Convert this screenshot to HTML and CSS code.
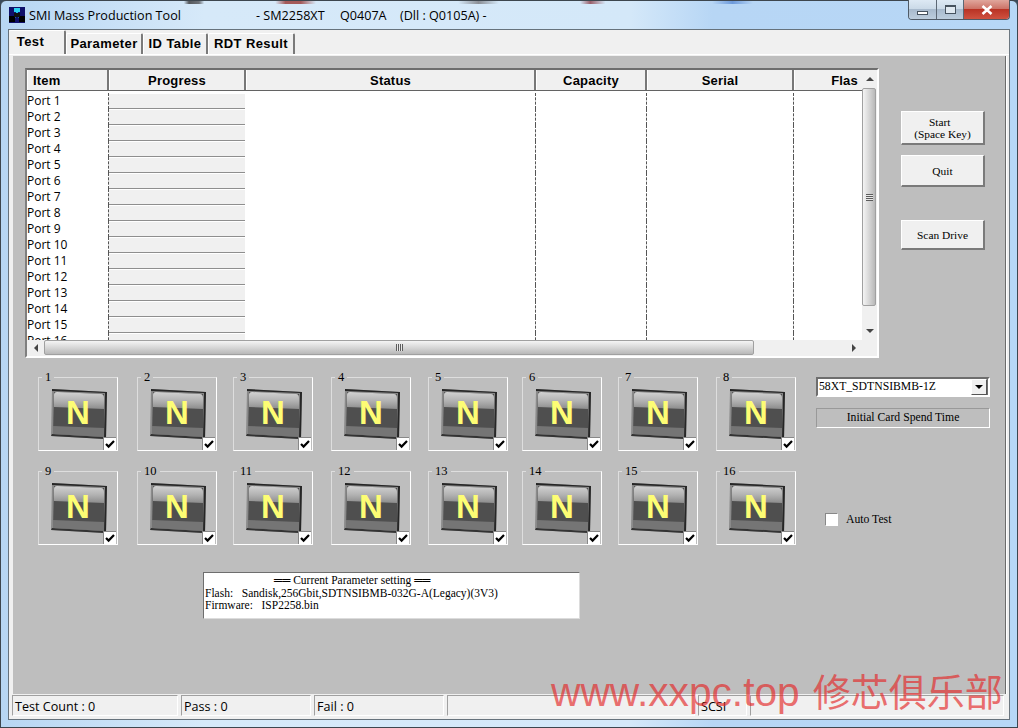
FILE: index.html
```html
<!DOCTYPE html>
<html lang="en">
<head>
<meta charset="utf-8">
<title>SMI Mass Production Tool</title>
<link rel="stylesheet" href="styles.css">
</head>
<body>
<svg class="defs" width="0" height="0" aria-hidden="true">
  <defs>
    <linearGradient id="glass" x1="0" y1="0" x2="0" y2="1">
      <stop offset="0" stop-color="#d2d2d2"/>
      <stop offset="0.55" stop-color="#b0b0b0"/>
      <stop offset="1" stop-color="#8c8c8c"/>
    </linearGradient>
    <symbol id="n-icon" viewBox="0 0 80 74">
      <polygon points="14,12 69,15 68,62 13,59" fill="#8a8a8a"/>
      <path d="M14 12 L69 15 L68 62 L66 61 L67 16 L14 14 Z" fill="#262626"/>
      <path d="M13 59 L14 57 L66 60 L66 62 Z" fill="#333"/>
      <polygon points="16,15 66,17 66,60 15,57" fill="#4f4f4f"/>
      <path d="M19 15 L63 17 Q66 17 66 21 L66 32 L16 30 L16 18 Q16 15 19 15 Z" fill="url(#glass)"/>
      <polygon points="15,49 66,51 66,60 15,57" fill="#757575"/>
      <text x="40" y="47" text-anchor="middle" class="n-letter">N</text>
    </symbol>
    <symbol id="tick" viewBox="0 0 12 12">
      <path d="M2 6 L4.6 8.6 L10 3" fill="none" stroke="#000" stroke-width="2.2"/>
    </symbol>
  </defs>
</svg>

<div class="window">
  <header class="titlebar">
    <svg class="app-icon" width="16" height="16" viewBox="0 0 16 16">
      <rect width="16" height="16" fill="#10106a"/>
      <path d="M8 2 L8 8 M8 8 L3 12 M8 8 L13 12" stroke="#27c6e8" stroke-width="2"/>
      <rect x="5" y="1" width="6" height="4" fill="#2bd0f0"/>
      <rect x="0" y="9" width="6" height="6" fill="#000"/>
      <rect x="10" y="9" width="6" height="6" fill="#000"/>
      <rect x="5" y="6" width="6" height="4" fill="#111"/>
    </svg>
    <span class="title-name">SMI Mass Production Tool</span>
    <span class="title-info">- SM2258XT</span>
    <span class="title-fw">Q0407A</span>
    <span class="title-dll">(Dll : Q0105A) -</span>
    <div class="win-buttons">
      <div class="win-btn win-min"><span class="min-glyph"></span></div>
      <div class="win-btn win-max"><span class="max-glyph"></span></div>
      <div class="win-btn win-close">
        <svg width="12" height="10" viewBox="0 0 12 10"><path d="M1.5 1 L10.5 9 M10.5 1 L1.5 9" stroke="#fff" stroke-width="2.6"/></svg>
      </div>
    </div>
  </header>

  <div class="client">
    <nav class="tabs">
      <div class="tab tab-active">Test</div>
      <div class="tab tab-param">Parameter</div>
      <div class="tab tab-id">ID Table</div>
      <div class="tab tab-rdt">RDT Result</div>
    </nav>

    <main class="panel">
      <section class="top-row">
        <div class="list">
          <div class="list-main">
            <div class="table">
              <div class="row head">
                <div class="hcell">Item</div>
                <div class="hcell hc">Progress</div>
                <div class="hcell hc">Status</div>
                <div class="hcell hc">Capacity</div>
                <div class="hcell hc">Serial</div>
                <div class="hcell hc flash">Flas</div>
              </div>
              <div class="body">
                <div class="row"><div class="cell item">Port 1</div><div class="prog"></div><div class="cell"></div><div class="cell"></div><div class="cell"></div><div></div></div>
                <div class="row"><div class="cell item">Port 2</div><div class="prog"></div><div class="cell"></div><div class="cell"></div><div class="cell"></div><div></div></div>
                <div class="row"><div class="cell item">Port 3</div><div class="prog"></div><div class="cell"></div><div class="cell"></div><div class="cell"></div><div></div></div>
                <div class="row"><div class="cell item">Port 4</div><div class="prog"></div><div class="cell"></div><div class="cell"></div><div class="cell"></div><div></div></div>
                <div class="row"><div class="cell item">Port 5</div><div class="prog"></div><div class="cell"></div><div class="cell"></div><div class="cell"></div><div></div></div>
                <div class="row"><div class="cell item">Port 6</div><div class="prog"></div><div class="cell"></div><div class="cell"></div><div class="cell"></div><div></div></div>
                <div class="row"><div class="cell item">Port 7</div><div class="prog"></div><div class="cell"></div><div class="cell"></div><div class="cell"></div><div></div></div>
                <div class="row"><div class="cell item">Port 8</div><div class="prog"></div><div class="cell"></div><div class="cell"></div><div class="cell"></div><div></div></div>
                <div class="row"><div class="cell item">Port 9</div><div class="prog"></div><div class="cell"></div><div class="cell"></div><div class="cell"></div><div></div></div>
                <div class="row"><div class="cell item">Port 10</div><div class="prog"></div><div class="cell"></div><div class="cell"></div><div class="cell"></div><div></div></div>
                <div class="row"><div class="cell item">Port 11</div><div class="prog"></div><div class="cell"></div><div class="cell"></div><div class="cell"></div><div></div></div>
                <div class="row"><div class="cell item">Port 12</div><div class="prog"></div><div class="cell"></div><div class="cell"></div><div class="cell"></div><div></div></div>
                <div class="row"><div class="cell item">Port 13</div><div class="prog"></div><div class="cell"></div><div class="cell"></div><div class="cell"></div><div></div></div>
                <div class="row"><div class="cell item">Port 14</div><div class="prog"></div><div class="cell"></div><div class="cell"></div><div class="cell"></div><div></div></div>
                <div class="row"><div class="cell item">Port 15</div><div class="prog"></div><div class="cell"></div><div class="cell"></div><div class="cell"></div><div></div></div>
                <div class="row"><div class="cell item">Port 16</div><div class="prog"></div><div class="cell"></div><div class="cell"></div><div class="cell"></div><div></div></div>
              </div>
            </div>
            <div class="vscroll">
              <div class="sb-arrow"><span class="tri tri-up"></span></div>
              <div class="vthumb"><span class="grip-v"></span></div>
              <div class="sb-track"></div>
              <div class="sb-arrow"><span class="tri tri-down"></span></div>
            </div>
          </div>
          <div class="hscroll">
            <div class="sb-arrow-h"><span class="tri tri-left"></span></div>
            <div class="hthumb"><span class="grip-h"></span></div>
            <div class="sb-track"></div>
            <div class="sb-arrow-h"><span class="tri tri-right"></span></div>
            <div class="sb-corner"></div>
          </div>
        </div>
        <div class="actions">
          <button class="btn btn-start">Start&nbsp;&nbsp;<br>(Space Key)</button>
          <button class="btn btn-quit">Quit</button>
          <button class="btn btn-scan">Scan Drive</button>
        </div>
      </section>

      <section class="mid-row">
        <div class="ports">
          <div class="port"><span class="legend">1</span><svg class="n-svg"><use href="#n-icon"/></svg><span class="chk"><svg width="12" height="12"><use href="#tick"/></svg></span></div>
          <div class="port"><span class="legend">2</span><svg class="n-svg"><use href="#n-icon"/></svg><span class="chk"><svg width="12" height="12"><use href="#tick"/></svg></span></div>
          <div class="port"><span class="legend">3</span><svg class="n-svg"><use href="#n-icon"/></svg><span class="chk"><svg width="12" height="12"><use href="#tick"/></svg></span></div>
          <div class="port"><span class="legend">4</span><svg class="n-svg"><use href="#n-icon"/></svg><span class="chk"><svg width="12" height="12"><use href="#tick"/></svg></span></div>
          <div class="port"><span class="legend">5</span><svg class="n-svg"><use href="#n-icon"/></svg><span class="chk"><svg width="12" height="12"><use href="#tick"/></svg></span></div>
          <div class="port"><span class="legend">6</span><svg class="n-svg"><use href="#n-icon"/></svg><span class="chk"><svg width="12" height="12"><use href="#tick"/></svg></span></div>
          <div class="port"><span class="legend">7</span><svg class="n-svg"><use href="#n-icon"/></svg><span class="chk"><svg width="12" height="12"><use href="#tick"/></svg></span></div>
          <div class="port"><span class="legend">8</span><svg class="n-svg"><use href="#n-icon"/></svg><span class="chk"><svg width="12" height="12"><use href="#tick"/></svg></span></div>
          <div class="port"><span class="legend">9</span><svg class="n-svg"><use href="#n-icon"/></svg><span class="chk"><svg width="12" height="12"><use href="#tick"/></svg></span></div>
          <div class="port"><span class="legend">10</span><svg class="n-svg"><use href="#n-icon"/></svg><span class="chk"><svg width="12" height="12"><use href="#tick"/></svg></span></div>
          <div class="port"><span class="legend">11</span><svg class="n-svg"><use href="#n-icon"/></svg><span class="chk"><svg width="12" height="12"><use href="#tick"/></svg></span></div>
          <div class="port"><span class="legend">12</span><svg class="n-svg"><use href="#n-icon"/></svg><span class="chk"><svg width="12" height="12"><use href="#tick"/></svg></span></div>
          <div class="port"><span class="legend">13</span><svg class="n-svg"><use href="#n-icon"/></svg><span class="chk"><svg width="12" height="12"><use href="#tick"/></svg></span></div>
          <div class="port"><span class="legend">14</span><svg class="n-svg"><use href="#n-icon"/></svg><span class="chk"><svg width="12" height="12"><use href="#tick"/></svg></span></div>
          <div class="port"><span class="legend">15</span><svg class="n-svg"><use href="#n-icon"/></svg><span class="chk"><svg width="12" height="12"><use href="#tick"/></svg></span></div>
          <div class="port"><span class="legend">16</span><svg class="n-svg"><use href="#n-icon"/></svg><span class="chk"><svg width="12" height="12"><use href="#tick"/></svg></span></div>
        </div>
        <aside class="side">
          <div class="combo"><span class="combo-text">58XT_SDTNSIBMB-1Z</span><span class="combo-btn"><span class="tri tri-combo"></span></span></div>
          <div class="spend">Initial Card Spend Time</div>
          <label class="auto"><span class="auto-box"></span><span>Auto Test</span></label>
        </aside>
      </section>

      <section class="params">
        <div class="param-head">══ Current Parameter setting ══</div>
        <div class="param-line">Flash:&nbsp;&nbsp; Sandisk,256Gbit,SDTNSIBMB-032G-A(Legacy)(3V3)</div>
        <div class="param-line">Firmware:&nbsp;&nbsp; ISP2258.bin</div>
      </section>
    </main>

    <footer class="status">
      <div class="st st-count">Test Count : 0</div>
      <div class="st st-pass">Pass : 0</div>
      <div class="st st-fail">Fail : 0</div>
      <div class="st st-blank"></div>
      <div class="st st-scsi">SCSI</div>
      <div class="st st-rest"></div>
    </footer>
  </div>

  <div class="watermark"><span class="wm-latin">www.xxpc.top</span><span class="wm-cjk">修芯俱乐部</span></div>
</div>
</body>
</html>
```

FILE: styles.css
```css
* { box-sizing: border-box; }

html, body {
  margin: 0;
  padding: 0;
}

body {
  width: 1018px;
  height: 728px;
  overflow: hidden;
  background: #3a4a5a;
}

.defs { position: absolute; }

.window {
  position: relative;
  width: 1018px;
  height: 728px;
  display: flex;
  flex-direction: column;
  padding: 0 8px 7px;
  border: 1px solid #3d464e;
  border-radius: 6px 6px 0 0;
  background:
    linear-gradient(90deg, transparent 18%, #55585c 18.5%, #6d7278 19.5%, transparent 20%, transparent 27%, #a45a5a 28%, #a45a5a 29.5%, transparent 31%, transparent 45%, #8b8f96 47%, transparent 49%, transparent 57%, #9a5f6a 58%, transparent 59.5%, transparent 70%, #6d9adb 72%, transparent 74%, transparent 90%) 0 0 / 100% 3px no-repeat,
    linear-gradient(90deg, #b7d6f3 0, #d6e9f9 20%, #d4e8f9 62%, #b7d6f5 70%, #b7d7f6 100%);
}

/* title bar */
.titlebar {
  height: 28px;
  margin: 0 -1px 0 0;
  display: flex;
  align-items: center;
  font: 12.6px "Open Sans", "Noto Sans", sans-serif;
  color: #000;
  flex: none;
}

.app-icon { flex: none; margin-right: 4px; }

.title-name { width: 227px; white-space: nowrap; }
.title-info { width: 84px; white-space: nowrap; }
.title-fw { width: 60px; white-space: nowrap; }
.title-dll { white-space: nowrap; }

.win-buttons {
  margin-left: auto;
  align-self: flex-start;
  display: flex;
  height: 20px;
  margin-top: -1px;
  border: 1px solid #4f5a66;
  border-top: none;
  border-radius: 0 0 4px 4px;
  overflow: hidden;
}

.win-btn {
  display: flex;
  align-items: center;
  justify-content: center;
}

.win-min, .win-max {
  width: 28px;
  background: linear-gradient(180deg, #dde9f4, #cbdae8 45%, #a8bacd 50%, #bccddd);
  border-right: 1px solid #5c6875;
}

.win-max { width: 27px; }

.min-glyph {
  width: 11px;
  height: 4px;
  margin-top: 6px;
  background: #fff;
  border: 1px solid #46525e;
}

.max-glyph {
  width: 11px;
  height: 9px;
  background: #dfe8f0;
  border: 1px solid #46525e;
  border-top-width: 2px;
}

.win-close {
  width: 45px;
  background: linear-gradient(180deg, #e0a69c, #cd7468 45%, #b93325 50%, #cf5240);
}

/* client area */
.client {
  flex: 1;
  min-height: 0;
  display: flex;
  flex-direction: column;
  background: #f0f0f0;
  border: 1px solid #66727c;
  border-right-color: #6c7780;
  margin-right: -1px;
  margin-left: -1px;
}

.tabs {
  height: 25px;
  flex: none;
  display: flex;
  align-items: flex-end;
  border-bottom: 1px solid #fff;
  font: bold 13px "Liberation Sans", Arial, sans-serif;
  letter-spacing: 0.4px;
  color: #000;
}

.tab {
  height: 21px;
  padding-bottom: 1px;
  display: flex;
  align-items: center;
  justify-content: center;
  background: #f0f0f0;
  border-top: 1px solid #fff;
  border-left: 1px solid #fff;
  border-right: 2px solid #7a7a7a;
  border-radius: 2px 2px 0 0;
}

.tab-active {
  width: 57px;
  height: 24px;
  padding: 0 12px 3px 0;
  border-left: none;
}

.tab-param { width: 77px; }
.tab-id { width: 65px; }
.tab-rdt { width: 87px; }

/* panel */
.panel {
  flex: 1;
  min-height: 0;
  margin: 1px 3px 0 4px;
  padding: 12px 0 0 12px;
  background: #bebebe;
  border-right: 1px solid #6c6c6c;
  box-shadow: 1px 0 0 #fff;
  display: flex;
  flex-direction: column;
}

.top-row { display: flex; flex: none; }

.list {
  width: 854px;
  height: 290px;
  flex: none;
  display: flex;
  flex-direction: column;
  background: #fff;
  border-style: solid;
  border-width: 2px;
  border-color: #6e6e6e #fff #fff #7f7f7f;
}

.list-main { flex: 1; min-height: 0; display: flex; }

.table { width: 835px; flex: none; overflow: hidden; }

.row {
  display: grid;
  grid-template-columns: 82px 137px 290px 111px 147px 68px;
  height: 16px;
}

.head {
  height: 21px;
  border-bottom: 1px solid #636363;
  font: bold 13px "Liberation Sans", Arial, sans-serif;
  letter-spacing: 0.2px;
  color: #000;
}

.hcell {
  display: flex;
  align-items: center;
  padding-left: 5px;
  background: #f0f0f0;
  border-right: 2px solid #777;
  border-left: 1px solid #fff;
  padding-top: 1px;
}

.hc { justify-content: center; padding-left: 0; }

.flash {
  justify-content: flex-end;
  padding-right: 4px;
  border-right: none;
  white-space: nowrap;
  overflow: hidden;
}

.body {
  height: 247px;
  margin-top: 2px;
  overflow: hidden;
}

.cell {
  border-right: 1px dashed #555;
  font: 12px/16px "Open Sans", "Noto Sans", sans-serif;
  color: #000;
  white-space: nowrap;
}

.prog {
  background: #f0f0f0;
  border-bottom: 1px solid #8e8e8e;
  margin-top: 1px;
  margin-right: 1px;
}

/* scrollbars */
.vscroll {
  flex: 1;
  display: flex;
  flex-direction: column;
  background: #f0f0f0;
}

.sb-arrow {
  height: 18px;
  flex: none;
  display: flex;
  align-items: center;
  justify-content: center;
}

.vthumb {
  height: 218px;
  flex: none;
  margin: 0 1px 0 0;
  display: flex;
  align-items: center;
  justify-content: center;
  background: linear-gradient(90deg, #f4f4f4, #d4d4d4 55%, #b8b8b8);
  border: 1px solid #a0a0a0;
  border-radius: 2px;
}

.grip-v {
  width: 7px;
  height: 7px;
  background: repeating-linear-gradient(180deg, #5c5c5c 0 1px, #e8e8e8 1px 2px);
}

.sb-track { flex: 1; background: #f0f0f0; }

.hscroll {
  height: 16px;
  flex: none;
  display: flex;
  background: #f0f0f0;
}

.sb-arrow-h {
  width: 17px;
  flex: none;
  display: flex;
  align-items: center;
  justify-content: center;
}

.hthumb {
  width: 710px;
  flex: none;
  margin-bottom: 1px;
  display: flex;
  align-items: center;
  justify-content: center;
  background: linear-gradient(180deg, #f4f4f4, #d4d4d4 55%, #b8b8b8);
  border: 1px solid #a0a0a0;
  border-radius: 2px;
}

.grip-h {
  width: 7px;
  height: 7px;
  background: repeating-linear-gradient(90deg, #5c5c5c 0 1px, #e8e8e8 1px 2px);
}

.sb-corner { width: 15px; flex: none; }

.tri { width: 0; height: 0; display: block; border-style: solid; }
.tri-up { border-width: 0 4px 4px; border-color: transparent transparent #444; }
.tri-down { border-width: 4px 4px 0; border-color: #444 transparent transparent; }
.tri-left { border-width: 4px 4px 4px 0; border-color: transparent #444 transparent transparent; }
.tri-right { border-width: 4px 0 4px 4px; border-color: transparent transparent transparent #444; }
.tri-combo { border-width: 4px 4px 0; border-color: #000 transparent transparent; }

/* action buttons */
.actions {
  margin-left: 22px;
  padding-top: 43px;
  display: flex;
  flex-direction: column;
  align-items: flex-start;
}

.btn {
  width: 84px;
  padding: 0;
  background: #f0f0f0;
  border-style: solid;
  border-width: 1px 2px 2px 1px;
  border-color: #fff #7a7a7a #7a7a7a #fff;
  font: 11.4px/12px "Liberation Serif", "Noto Sans CJK TC", serif;
  color: #000;
  text-align: center;
}

.btn-start { height: 34px; }
.btn-quit { height: 32px; margin-top: 10px; }
.btn-scan { height: 30px; margin-top: 33px; }

/* port grid */
.mid-row {
  display: flex;
  flex: none;
  margin-top: 19px;
  padding-left: 13px;
}

.ports {
  width: 758px;
  flex: none;
  display: grid;
  grid-template-columns: 99px 96px 98px 97px 94px 96px 98px 80px;
  grid-auto-rows: 74px;
  row-gap: 20px;
}

.port {
  position: relative;
  width: 80px;
  height: 74px;
  border-style: solid;
  border-width: 1px;
  border-color: #dedede #fff #fff #dedede;
}

.legend {
  position: absolute;
  top: -8px;
  left: 3px;
  padding: 0 3px;
  background: #bebebe;
  font: 12.5px/14px "Liberation Serif", serif;
  color: #000;
}

.n-svg {
  position: absolute;
  left: -1px;
  top: -1px;
  width: 80px;
  height: 74px;
}

.n-letter {
  font: bold 33px "Liberation Sans", Arial, sans-serif;
  fill: #fdfd74;
}

.chk {
  position: absolute;
  right: 1px;
  bottom: 0;
  width: 13px;
  height: 13px;
  background: #fff;
  border-top: 1px solid #888;
  border-left: 1px solid #888;
  display: flex;
  align-items: center;
  justify-content: center;
}

/* side column */
.side {
  margin-left: 20px;
  width: 174px;
  flex: none;
  font: 11.7px/14px "Liberation Serif", serif;
  color: #000;
}

.combo {
  height: 20px;
  display: flex;
  align-items: center;
  justify-content: space-between;
  background: #fff;
  border-style: solid;
  border-width: 2px;
  border-color: #6e6e6e #fff #fff #6e6e6e;
  box-shadow: inset -1px 0 0 #6e6e6e;
  padding-left: 1px;
}

.combo-btn {
  width: 16px;
  height: 16px;
  margin-right: 1px;
  display: flex;
  align-items: center;
  justify-content: center;
  background: #f0f0f0;
  border-style: solid;
  border-width: 1px;
  border-color: #fff #555 #555 #fff;
}

.spend {
  height: 20px;
  margin-top: 11px;
  display: flex;
  align-items: center;
  justify-content: center;
  border-style: solid;
  border-width: 1px;
  border-color: #999 #fff #fff #999;
}

.auto {
  margin: 85px 0 0 9px;
  display: flex;
  align-items: center;
  gap: 8px;
  height: 13px;
}

.auto-box {
  width: 13px;
  height: 13px;
  background: #fff;
  border-style: solid;
  border-width: 1px;
  border-color: #888 #fff #fff #888;
}

/* parameters */
.params {
  width: 377px;
  height: 47px;
  margin: 27px 0 0 178px;
  flex: none;
  padding: 1px 0 0 1px;
  background: #fff;
  border-style: solid;
  border-width: 1px;
  border-color: #6e6e6e #dcdcdc #dcdcdc #6e6e6e;
  font: 11.5px/12.5px "Liberation Serif", serif;
  color: #000;
  white-space: nowrap;
}

.param-head { padding-left: 69px; }

/* status */
.status {
  height: 25px;
  flex: none;
  display: flex;
  padding: 1px 0 3px 3px;
  font: 12.6px/22px "Open Sans", "Noto Sans", sans-serif;
  color: #000;
}

.st {
  border-style: solid;
  border-width: 1px;
  border-color: #a0a0a0 #fff #fff #a0a0a0;
  padding-left: 2px;
  margin-right: 3px;
  white-space: nowrap;
}

.st-count { width: 166px; }
.st-pass { width: 130px; }
.st-fail { width: 130px; }
.st-blank { width: 248px; }
.st-scsi { width: 49px; }
.st-rest { flex: 1; margin-right: 5px; }

/* watermark overlay */
.watermark {
  position: absolute;
  left: 550px;
  top: 666px;
  white-space: nowrap;
  color: rgba(228, 42, 42, 0.68);
  pointer-events: none;
  font: 40.7px/46px "Liberation Sans", "Noto Sans CJK SC", sans-serif;
}

.wm-cjk {
  margin-left: 13px;
  font: 38px/46px "Noto Sans CJK SC", sans-serif;
}
```
